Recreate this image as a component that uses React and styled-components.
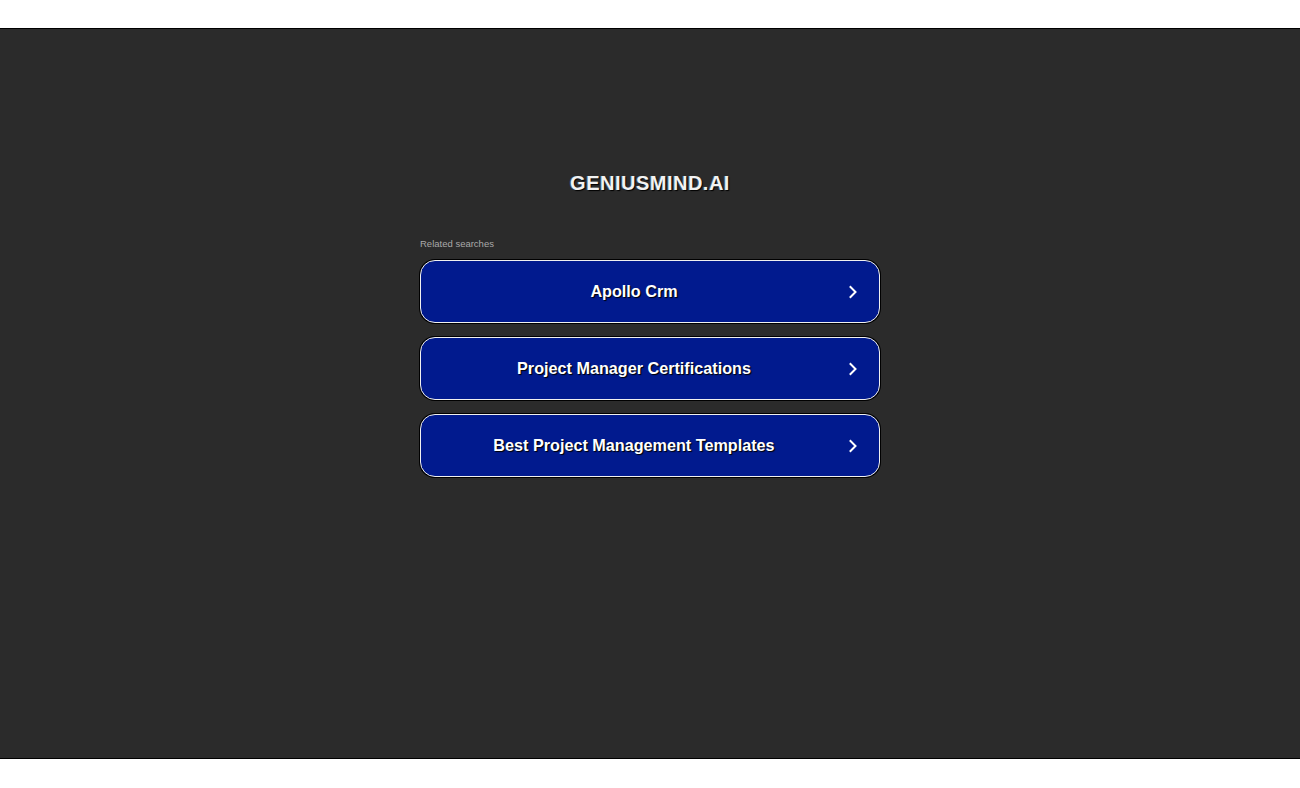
import React from "react";
import styled, { createGlobalStyle } from "styled-components";

const GlobalStyle = createGlobalStyle`
  html, body {
    margin: 0;
    padding: 0;
    background: #ffffff;
    font-family: "Liberation Sans", Arial, sans-serif;
  }
`;

const Page = styled.div`
  padding-top: 28px;
  height: 788px;
  box-sizing: border-box;
`;

const Stage = styled.div`
  background: #2b2b2b;
  border-top: 1px solid #000;
  border-bottom: 1px solid #000;
  height: 729px;
  display: flex;
  flex-direction: column;
  align-items: center;
`;

const Title = styled.h1`
  margin: 143px 0 0;
  font-size: 20px;
  font-weight: 700;
  color: #f2f2f2;
  letter-spacing: 0.5px;
  text-shadow: 1px 1px 1px #000, -1px 0 0 rgba(120, 200, 255, 0.35);
  line-height: 23px;
`;

const Panel = styled.div`
  width: 460px;
  margin-top: 43px;
  display: flex;
  flex-direction: column;
`;

const Label = styled.div`
  font-size: 9.5px;
  color: #a9a9a9;
  line-height: 12px;
  margin-bottom: 10px;
`;

const List = styled.div`
  display: flex;
  flex-direction: column;
  gap: 14px;
`;

const Item = styled.a`
  display: flex;
  align-items: center;
  height: 63px;
  box-sizing: border-box;
  background: #011a8e;
  border: 1px solid #f0f0f0;
  border-radius: 15px;
  box-shadow: 0 0 0 1px #000;
  color: #ffffff;
  text-decoration: none;
  padding: 0 20px 0 0;
  cursor: pointer;
`;

const ItemText = styled.span`
  flex: 1;
  text-align: center;
  font-size: 16.2px;
  font-weight: 700;
  text-shadow: 1px 1px 1px #000;
`;

const Chevron = () => (
  <svg width="12" height="16" viewBox="0 0 12 16">
    <path d="M3.5 3 L8.5 8 L3.5 13" fill="none" stroke="#fff" strokeWidth="2" strokeLinecap="square" />
  </svg>
);

const searches = [
  "Apollo Crm",
  "Project Manager Certifications",
  "Best Project Management Templates",
];

export default function App() {
  return (
    <>
      <GlobalStyle />
      <Page>
        <Stage>
          <Title>GENIUSMIND.AI</Title>
          <Panel>
            <Label>Related searches</Label>
            <List>
              {searches.map((s) => (
                <Item key={s}>
                  <ItemText>{s}</ItemText>
                  <Chevron />
                </Item>
              ))}
            </List>
          </Panel>
        </Stage>
      </Page>
    </>
  );
}
